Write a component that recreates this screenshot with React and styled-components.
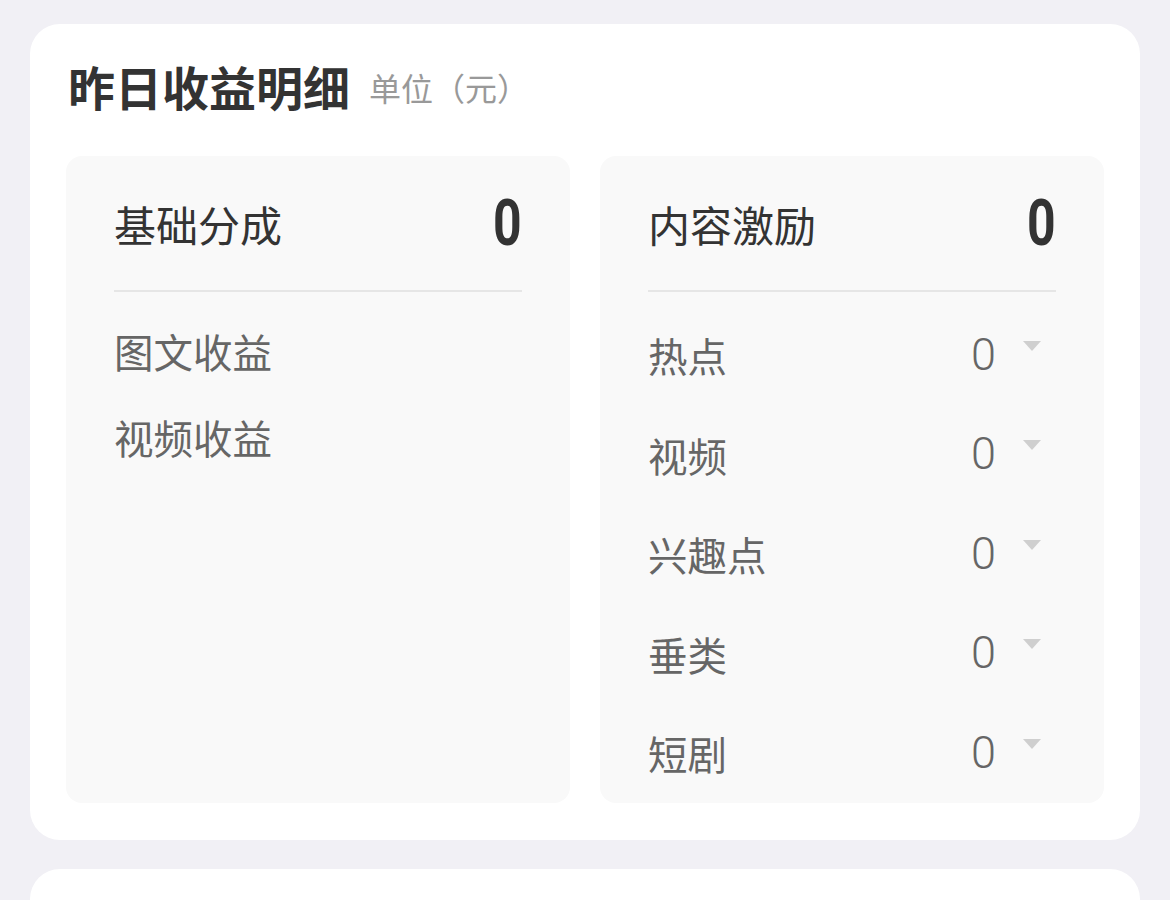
import React from 'react'
import styled, { createGlobalStyle } from 'styled-components'

//---------- styles ----------

const GlobalStyle = createGlobalStyle`
  html, body {
    margin: 0;
    padding: 0;
    background: #f1f0f5;
    font-family: "Noto Sans CJK SC", "Noto Sans", sans-serif;
  }
`

const Page = styled.div`
  padding: 24px 30px 0;
  display: flex;
  flex-direction: column;
  gap: 29px;
`

const Card = styled.section`
  background: #fff;
  border-radius: 30px;
  padding: 25px 36px 37px;
`

const EmptyCard = styled.div`
  background: #fff;
  border-radius: 30px;
  height: 200px;
`

const TitleRow = styled.div`
  display: flex;
  align-items: center;
  gap: 19px;
  padding-left: 2px;
  margin-bottom: 35px;
  height: 72px;
`

const Title = styled.h2`
  margin: 0;
  font-size: 47px;
  font-weight: 700;
  color: #333;
`

const Unit = styled.span`
  font-size: 32px;
  color: #999;
  margin-top: 4px;
`

const Grid = styled.div`
  display: grid;
  grid-template-columns: 1fr 1fr;
  gap: 30px;
`

const Panel = styled.div`
  background: #f9f9f9;
  border-radius: 16px;
  padding: 0 48px;
`

const PanelHeader = styled.div`
  height: 134px;
  display: flex;
  align-items: center;
  justify-content: space-between;
  border-bottom: 2px solid #e6e6e6;
`

const HeaderLabel = styled.span`
  font-size: 42px;
  color: #333;
`

const BigNumber = styled.span`
  display: inline-block;
  font-family: Roboto, "Liberation Sans", sans-serif;
  font-weight: 700;
  font-size: 64px;
  color: #333;
  transform: scaleX(0.78);
  transform-origin: right center;
`

const List = styled.div`
  padding-top: ${({ $top }) => $top}px;
`

const Row = styled.div`
  height: ${({ $h }) => $h}px;
  display: flex;
  align-items: center;
  justify-content: space-between;
`

const RowLabel = styled.span`
  font-size: 39.5px;
  color: #666;
`

const RowValue = styled.div`
  display: flex;
  align-items: flex-start;
  gap: 27px;
  margin-right: 15px;
`

const Digit = styled.span`
  font-family: Roboto, "Liberation Sans", sans-serif;
  font-weight: 300;
  font-size: 45px;
  line-height: 44px;
  color: #666;
`

const Caret = styled.span`
  width: 0;
  height: 0;
  margin-top: 8px;
  border-left: 9px solid transparent;
  border-right: 9px solid transparent;
  border-top: 10px solid #cfcfcf;
`

//---------- data ----------

const basic = ['图文收益', '视频收益']
const content = ['热点', '视频', '兴趣点', '垂类', '短剧']

//---------- composant principal ----------

export default function App() {
  return (
    <>
      <GlobalStyle />
      <Page>
        <Card>
          <TitleRow>
            <Title>昨日收益明细</Title>
            <Unit>单位（元）</Unit>
          </TitleRow>
          <Grid>
            <Panel>
              <PanelHeader>
                <HeaderLabel>基础分成</HeaderLabel>
                <BigNumber>0</BigNumber>
              </PanelHeader>
              <List $top={15}>
                {basic.map((name) => (
                  <Row key={name} $h={86}>
                    <RowLabel>{name}</RowLabel>
                  </Row>
                ))}
              </List>
            </Panel>
            <Panel>
              <PanelHeader>
                <HeaderLabel>内容激励</HeaderLabel>
                <BigNumber>0</BigNumber>
              </PanelHeader>
              <List $top={13}>
                {content.map((name) => (
                  <Row key={name} $h={99.5}>
                    <RowLabel>{name}</RowLabel>
                    <RowValue>
                      <Digit>0</Digit>
                      <Caret />
                    </RowValue>
                  </Row>
                ))}
              </List>
            </Panel>
          </Grid>
        </Card>
        <EmptyCard />
      </Page>
    </>
  )
}
